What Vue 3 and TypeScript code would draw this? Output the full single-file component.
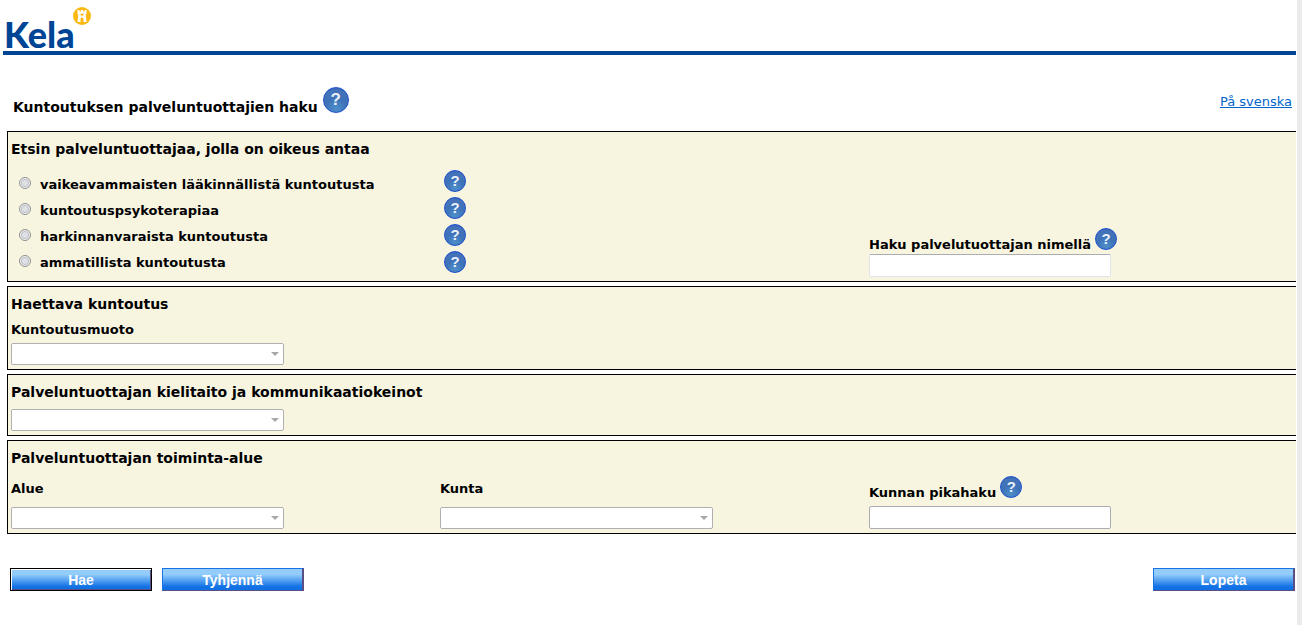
<script setup lang="ts">
import { ref } from 'vue'

interface RehabOption {
  id: string
  label: string
}

const options: RehabOption[] = [
  { id: 'vaikea', label: 'vaikeavammaisten lääkinnällistä kuntoutusta' },
  { id: 'psyko', label: 'kuntoutuspsykoterapiaa' },
  { id: 'harkinta', label: 'harkinnanvaraista kuntoutusta' },
  { id: 'ammatti', label: 'ammatillista kuntoutusta' },
]

const selected = ref<string>('')
const providerName = ref<string>('')
const quickSearch = ref<string>('')

function clearForm(): void {
  selected.value = ''
  providerName.value = ''
  quickSearch.value = ''
}
</script>

<template>
  <div class="page">
    <header class="brand">
      <span class="brand-name">Kela</span>
      <svg class="brand-mark" width="18" height="18" viewBox="0 0 18 18" aria-hidden="true">
        <circle cx="9" cy="9" r="9" fill="#fdb913" />
        <path
          d="M4.5 3h2v1.6h1.4V3h2.2v1.6h1.4V3h2v4l-.8.8.8 7.2h-3v-3a1.5 1.5 0 0 0-3 0v3h-3l.8-7.2-.8-.8z"
          fill="#fff"
        />
        <path d="M7.6 6.6h2.8v2H7.6z" fill="#fdb913" />
      </svg>
    </header>

    <main class="content">
      <div class="title-row">
        <h1>Kuntoutuksen palveluntuottajien haku</h1>
        <button class="help help-large" type="button" aria-label="Ohje">?</button>
        <a class="language" href="#">På svenska</a>
      </div>

      <form @submit.prevent>
        <section class="panel panel-type">
          <h2>Etsin palveluntuottajaa, jolla on oikeus antaa</h2>
          <div class="columns">
            <div class="radio-list">
              <label v-for="option in options" :key="option.id" class="radio-row">
                <input v-model="selected" type="radio" name="type" :value="option.id" />
                <span>{{ option.label }}</span>
              </label>
            </div>
            <div class="help-list">
              <button
                v-for="option in options"
                :key="option.id"
                class="help"
                type="button"
                :aria-label="'Ohje: ' + option.label"
              >?</button>
            </div>
            <div class="field name-field">
              <div class="label-row">
                <label for="name">Haku palvelutuottajan nimellä</label>
                <button class="help" type="button" aria-label="Ohje: nimihaku">?</button>
              </div>
              <input id="name" v-model="providerName" class="text soft" type="text" />
            </div>
          </div>
        </section>

        <section class="panel">
          <h2>Haettava kuntoutus</h2>
          <div class="columns">
            <div class="field">
              <label class="form-label" for="form">Kuntoutusmuoto</label>
              <div class="select"><select id="form" disabled></select></div>
            </div>
          </div>
        </section>

        <section class="panel">
          <h2>Palveluntuottajan kielitaito ja kommunikaatiokeinot</h2>
          <div class="columns">
            <div class="select">
              <select aria-label="Palveluntuottajan kielitaito ja kommunikaatiokeinot" disabled></select>
            </div>
          </div>
        </section>

        <section class="panel">
          <h2>Palveluntuottajan toiminta-alue</h2>
          <div class="columns">
            <div class="field">
              <label class="area-label" for="area">Alue</label>
              <div class="select"><select id="area" disabled></select></div>
            </div>
            <div class="field">
              <label class="area-label" for="town">Kunta</label>
              <div class="select"><select id="town" disabled></select></div>
            </div>
            <div class="field">
              <div class="label-row quick-row">
                <label for="quick">Kunnan pikahaku</label>
                <button class="help" type="button" aria-label="Ohje: kunnan pikahaku">?</button>
              </div>
              <input id="quick" v-model="quickSearch" class="text" type="text" />
            </div>
          </div>
        </section>

        <div class="actions">
          <button class="action primary" type="submit">Hae</button>
          <button class="action" type="button" @click="clearForm">Tyhjennä</button>
          <button class="action quit" type="button">Lopeta</button>
        </div>
      </form>
    </main>
  </div>
</template>

<style>
body {
  background: #fff;
}
</style>

<style scoped>
.page {
  box-sizing: border-box;
  min-height: 100vh;
  border-right: 5px solid #ebebeb;
  padding: 0 1px 0 3px;
  color: #000;
  font-family: Verdana, "DejaVu Sans", sans-serif;
  font-size: 13px;
}

.brand {
  display: flex;
  align-items: flex-start;
  box-sizing: border-box;
  height: 55px;
  padding: 7px 0 0 1px;
  border-bottom: 4px solid #004595;
}

.brand-name {
  color: #004595;
  font-family: Lato, sans-serif;
  font-size: 36px;
  font-weight: 900;
  line-height: 54px;
}

.brand-mark {
  margin-left: -2px;
}

.content {
  padding-left: 4px;
}

.title-row {
  display: flex;
  align-items: flex-start;
  height: 76px;
  box-sizing: border-box;
  padding: 32px 4px 0 6px;
}

h1,
h2 {
  margin: 0;
  font-size: 14px;
  font-weight: bold;
  line-height: 20px;
}

h1 {
  margin-top: 10px;
}

.language {
  margin: 7px 0 0 auto;
  color: #0066cc;
  line-height: 16px;
}

.help {
  display: block;
  flex: none;
  box-sizing: border-box;
  width: 22px;
  height: 22px;
  padding: 0;
  border: 1px solid #1c4fcb;
  border-radius: 50%;
  background: radial-gradient(circle at 50% 85%, #4f8fca 0%, #3d72b8 45%, #4673b9 75%, #2458bd 100%);
  color: #e9f0fa;
  font-family: "Liberation Sans", Arial, sans-serif;
  font-size: 15px;
  font-weight: bold;
  line-height: 20px;
  text-align: center;
}

.help-large {
  width: 26px;
  height: 26px;
  margin-left: 5px;
  font-size: 17px;
  line-height: 24px;
}

.panel {
  margin-bottom: 4px;
  padding: 7px 0 4px 3px;
  border: 1px solid #000;
  border-right: 0;
  background: #f7f4e0;
}

.columns {
  display: grid;
  grid-template-columns: repeat(3, 1fr);
  margin-right: -2px;
}

.radio-list {
  padding: 12px 0 2px 7px;
}

.radio-row {
  display: flex;
  align-items: center;
  height: 26px;
  font-weight: bold;
}

.radio-row input {
  appearance: none;
  box-sizing: border-box;
  width: 12px;
  height: 12px;
  margin: 0 9px 2px 1px;
  border: 1px solid #8e8f8f;
  border-radius: 50%;
  background: radial-gradient(circle, #dfe1e6 0 35%, #bfc2c8 50%, #f4f4f4 65%);
}

.radio-row input:checked {
  background: radial-gradient(circle, #1c4fcb 0 35%, #f4f4f4 50%);
}

.help-list {
  display: flex;
  flex-direction: column;
  gap: 5px;
  padding: 11px 0 0 4px;
}

.field {
  display: flex;
  flex-direction: column;
  align-items: flex-start;
  font-weight: bold;
}

.name-field {
  justify-content: flex-end;
}

.label-row {
  display: flex;
  align-items: flex-end;
  gap: 4px;
  height: 26px;
  line-height: 18px;
}

.label-row .help {
  align-self: flex-start;
}

.quick-row {
  margin: 8px 0 4px;
}

.text {
  box-sizing: border-box;
  width: 242px;
  height: 23px;
  border: 1px solid #abadb3;
  border-radius: 2px;
  background: #fff;
  font: inherit;
}

.soft {
  border-color: #abadb3 #e2e3ea #e2e3ea;
}

.form-label {
  padding: 8px 0 5px;
  line-height: 16px;
}

.area-label {
  padding: 13px 0 10px;
  line-height: 16px;
}

.select {
  position: relative;
  width: 273px;
  height: 22px;
}

.columns > .select {
  margin-top: 7px;
}

.select select {
  display: block;
  appearance: none;
  box-sizing: border-box;
  width: 100%;
  height: 22px;
  border: 1px solid #b0b0b0;
  border-radius: 2px;
  background: #fff;
  opacity: 1;
}

.select::after {
  content: "";
  position: absolute;
  top: 9px;
  right: 5px;
  border: 4px solid transparent;
  border-top-color: #a8a8a8;
  border-bottom: 0;
}

.actions {
  display: flex;
  gap: 10px;
  padding: 30px 1px 0 3px;
}

.action {
  box-sizing: border-box;
  width: 142px;
  height: 23px;
  padding: 0;
  border: 1px solid #1874e4;
  border-right: 2px solid #594f82;
  border-bottom-color: #594f82;
  background: linear-gradient(#94cdfb 0 25%, #1070e4 85%);
  color: #fff;
  font-family: "Liberation Sans", Arial, sans-serif;
  font-size: 14px;
  font-weight: bold;
  line-height: 20px;
}

.primary {
  border: 1px solid #000;
  box-shadow: inset 1px 1px #fff, inset -1px -1px #594f82;
}

.quit {
  margin-left: auto;
}
</style>
